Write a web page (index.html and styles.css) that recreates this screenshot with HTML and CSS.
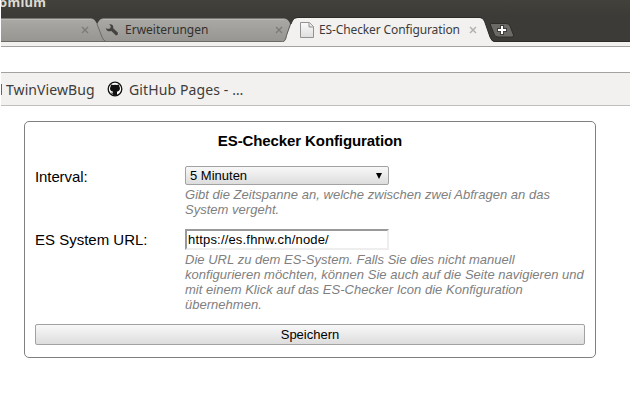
FILE: index.html
```html
<!DOCTYPE html>
<html lang="de">
<head>
<meta charset="utf-8">
<title>ES-Checker Configuration</title>
<link rel="stylesheet" href="styles.css">
</head>
<body>
<header class="browser">
  <div class="frame">
    <div class="window-title"><span>omium</span></div>
    <svg class="tab-shapes" width="629" height="28" viewBox="1 16 629 28" aria-hidden="true">
      <defs>
        <linearGradient id="tab" x1="0" y1="0" x2="0" y2="1"><stop offset="0" stop-color="#aaa9a6"/><stop offset="1" stop-color="#969592"/></linearGradient>
      </defs>
      <path d="M96 42 L96 27 C99 19 101 18.500 104 18.500 H283 C287 18.500 289 20 291 26 L284 41.500 H96Z" fill="url(#tab)"/>
      <path d="M0 41.500 V18.500 H90 C94 18.500 95 20 97 24 L102 37 Q103.500 41.500 106 41.500Z" fill="url(#tab)"/>
      <path d="M97 24 L102 37 Q103.500 41 106 41.500" fill="none" stroke="#6b6a67"/>
      <path d="M1 18.500 H91 M103 18.500 H284" stroke="#777673"/>
      <path d="M1 19.500 H91 M103 19.500 H284" stroke="#b8b7b4"/>
      <path d="M1 41.500 H285" stroke="#6b6a67"/>
      <path d="M282 42 C286 41 286 37 287 34 L291 24 C293 19 294 18 298 18 H479 C483 18 484 20 485.500 24 L490 37 Q491.500 42 495 42Z" fill="#f2f1f0"/>
      <path d="M283 41.500 C286 41 286 37 287 34 L290.500 24" fill="none" stroke="#5b5a57"/>
      <path d="M291 24 C293 19 294 18 298 17.500 H479 C483 17.500 484 20 485.500 24 L490 37 Q491.500 41.500 495 41.500 H630" fill="none" stroke="#2c2b28"/>
      <path d="M491 23.500 H506 Q509 23.500 510 26 L513.500 35 Q514 37 512 37 H498 Q495.500 37 494.500 35 L490.500 25 Q490 23.500 491 23.500Z" fill="#6b6a66" stroke="#2f2e2a"/>
      <path d="M502 25 V35 M497 30 H507" stroke="#3f3e3b" stroke-width="4"/>
      <path d="M502 26 V34 M498 30 H506" stroke="#fff" stroke-width="2"/>
    </svg>
    <nav class="tabs">
      <div class="tab tab-cut"><svg class="close" viewBox="0 0 8 8"><path d="M1 1 7 7M7 1 1 7"/></svg></div>
      <div class="tab tab-ext">
        <svg class="wrench" viewBox="0 0 14 14"><path d="M4.200 1.200 C7 .8 8.800 2.500 8.200 5.200 L13 9.800 Q13.300 12.200 11 12.600 L6.300 8 C3.600 9 1.300 7.800 .8 5.200 L3.200 6 L5.300 5.300 L5.800 3.300Z"/></svg>
        <span class="name">Erweiterungen</span>
        <svg class="close" viewBox="0 0 8 8"><path d="M1 1 7 7M7 1 1 7"/></svg>
      </div>
      <div class="tab tab-active">
        <svg class="page" viewBox="0 0 14 16"><defs><linearGradient id="sheet" x1="0" y1="0" x2="0" y2="1"><stop offset="0" stop-color="#fafafa"/><stop offset="1" stop-color="#dedede"/></linearGradient></defs><path d="M.5.5H9.500L13.500 4.500V15.500H.5Z"/><path d="M9 .5V5H13.500"/></svg>
        <span class="name">ES-Checker Configuration</span>
        <svg class="close" viewBox="0 0 8 8"><path d="M1 1 7 7M7 1 1 7"/></svg>
      </div>
    </nav>
  </div>
  <div class="toolbar-edge"></div>
  <div class="toolbar"></div>
  <nav class="bookmarks">
    <i class="favicon-cut"></i>
    <span class="bm-twin">TwinViewBug</span>
    <svg class="github" viewBox="0 0 16 16"><circle cx="8" cy="8" r="6.800" fill="#fff" stroke="#111" stroke-width="1.300"/><path d="M4 3.400 L6 4 Q8 3.600 10 4 L12 3.400 L12.400 5.500 C13.800 8 12.500 10.300 10 10.600 V14.500 H6 V12.800 Q4.500 13 3.800 11.500 Q5 12 6 11.600 V10.600 C3.500 10.300 2.200 8 3.600 5.500Z" fill="#111"/></svg>
    <span class="bm-git">GitHub Pages - …</span>
  </nav>
</header>
<main class="config">
  <h1>ES-Checker Konfiguration</h1>
  <div class="row row-interval">
    <label>Interval:</label>
    <div>
      <div class="select"><span>5 Minuten</span><svg viewBox="0 0 6 6"><path d="M0 0H6L3 6Z"/></svg></div>
      <p>Gibt die Zeitspanne an, welche zwischen zwei Abfragen an das System vergeht.</p>
    </div>
  </div>
  <div class="row row-url">
    <label>ES System URL:</label>
    <div>
      <input type="text" value="https://es.fhnw.ch/node/">
      <p>Die URL zu dem ES-System. Falls Sie dies nicht manuell konfigurieren möchten, können Sie auch auf die Seite navigieren und mit einem Klick auf das ES-Checker Icon die Konfiguration übernehmen.</p>
    </div>
  </div>
  <button>Speichern</button>
</main>
</body>
</html>
```
FILE: styles.css
```css
* { box-sizing: border-box; }
body { margin: 0; background: #fff; font: 15px "Liberation Sans", Arial, sans-serif; color: #000; overflow: hidden; }
.browser { margin-left: 1px; font-family: "Noto Sans", sans-serif; color: #3c3c3c; }
.frame { position: relative; height: 42px; background: linear-gradient(#42413b, #3c3b37 16px, #3c3b37); overflow: hidden; }
.window-title { height: 18px; color: #dfdbd2; font-size: 13px; font-weight: bold; line-height: 18px; overflow: hidden; }
.window-title span { display: block; margin: -7px 0 0 -2px; letter-spacing: .3px; }
.tab-shapes { position: absolute; left: 0; top: 16px; }
.tabs { position: relative; display: flex; height: 24px; }
.tab { display: flex; align-items: center; flex: none; font-size: 12px; white-space: nowrap; }
.tab-cut { width: 103px; padding-left: 80px; }
.tab-ext { width: 195px; padding-left: 1px; }
.tab-active { width: 190px; padding-left: 1px; }
.name { line-height: 22px; flex: none; }
.tab-ext .name { width: 84px; margin-left: 6px; color: #33302c; }
.tab-ext .close { margin-left: 66px; }
.tab-active .name { width: 141px; margin-left: 5px; letter-spacing: -.12px; }
.tab-active .close { margin-left: 9px; }
.close { width: 8px; height: 8px; flex: none; fill: none; stroke: #7b7a77; stroke-width: 1.300; }
.tab-active .close { stroke: #b3b1ae; stroke-width: 1.500; }
.wrench { width: 14px; height: 14px; flex: none; fill: #45433f; }
.page { width: 14px; height: 16px; flex: none; fill: url(#sheet); stroke: #929292; }
.toolbar-edge { height: 5px; background: #f2f1f0; border-bottom: 1px solid #a3a29e; }
.toolbar { height: 25px; background: #fff; }
.bookmarks { display: flex; align-items: center; height: 34px; background: #f2f1f0; border-top: 1px solid #a3a29e; border-bottom: 1px solid #c1bfbb; font-size: 14px; white-space: nowrap; }
.bookmarks span { padding-top: 1px; }
.favicon-cut { width: 1px; height: 11px; background: #b5472f; }
.bm-twin { width: 89px; margin-left: 4px; letter-spacing: .08px; }
.github { width: 16px; height: 16px; margin-left: 12px; }
.bm-git { margin-left: 6px; letter-spacing: .12px; }
.config { width: 572px; height: 237px; margin: 15px 0 0 24px; padding: 10px; border: 1px solid #808080; border-radius: 5px; }
h1 { margin: 0 0 16px; font-size: 15px; line-height: 18px; text-align: center; letter-spacing: -.1px; }
.row { display: grid; grid-template-columns: 150px 400px; }
.row label { line-height: 17px; padding-top: 2px; }
.row-interval label { letter-spacing: -.1px; }
.row-interval { height: 63px; }
.row-url { height: 95px; }
.select { display: flex; align-items: center; justify-content: space-between; width: 204px; height: 19px; padding: 0 6px 0 4px; border: 1px solid #a2a2a2; border-radius: 2px; background: linear-gradient(#f8f8f8, #ddd); font-size: 13px; line-height: 17px; }
.select svg { width: 6px; height: 6px; }
p { margin: 2px 0 0; color: #808080; font-size: 13px; font-style: italic; line-height: 15px; letter-spacing: .02px; }
input { display: block; width: 204px; height: 21px; margin: 0; padding: 1px; border: 2px solid; border-color: #999 #eee #eee #999; font: 13px "Liberation Sans", Arial, sans-serif; letter-spacing: .18px; color: #000; }
button { display: block; width: 550px; height: 21px; padding: 0; border: 1px solid #a2a2a2; border-radius: 2px; background: linear-gradient(#f8f8f8, #ddd); font: 13px/19px "Liberation Sans", Arial, sans-serif; color: #000; }
```
